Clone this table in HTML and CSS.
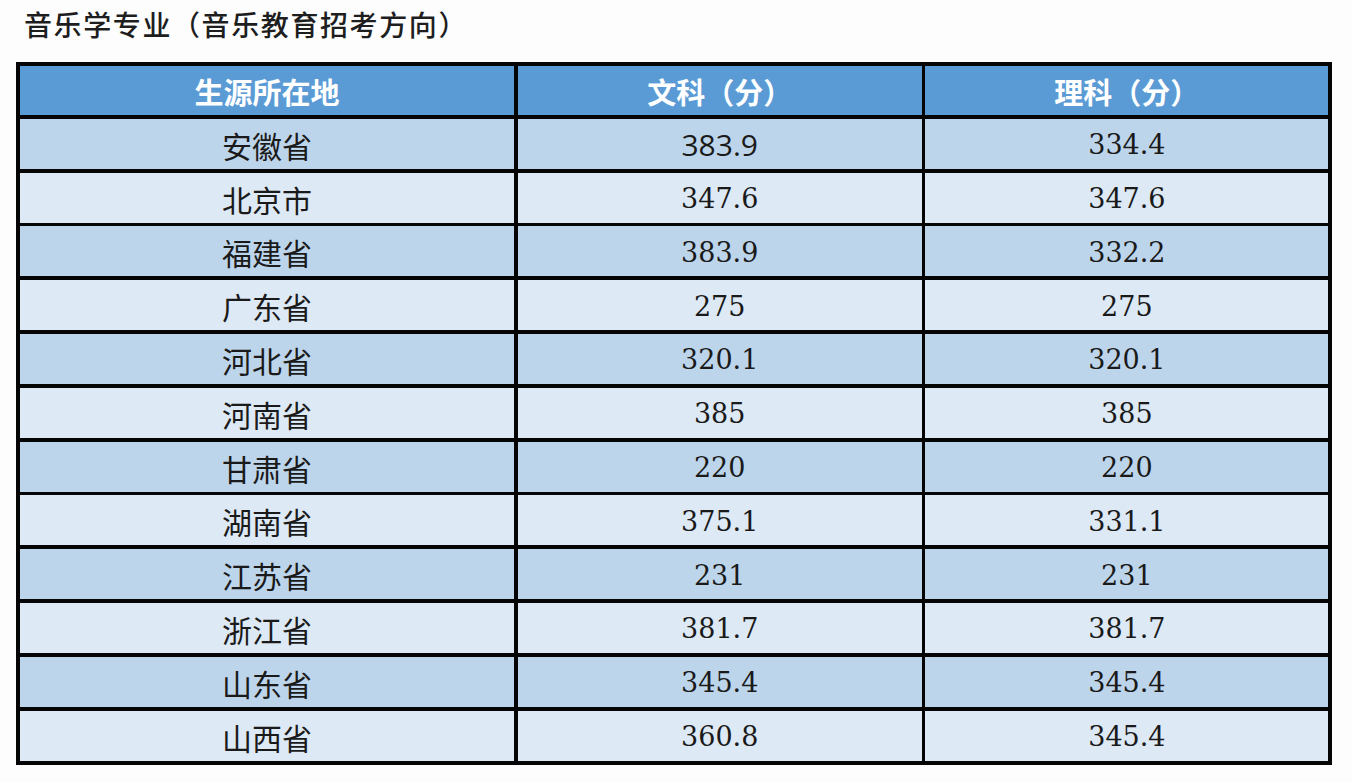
FILE: index.html
```html
<!DOCTYPE html>
<html lang="zh">
<head>
<meta charset="utf-8">
<title>音乐学专业</title>
<link rel="stylesheet" href="styles.css">
</head>
<body>
<h1 class="title">音乐学专业（音乐教育招考方向）</h1>
<div class="table">
  <div class="cell head">生源所在地</div>
  <div class="cell head">文科（分）</div>
  <div class="cell head">理科（分）</div>

  <div class="cell dark name">安徽省</div>
  <div class="cell dark num sans">383.9</div>
  <div class="cell dark num">334.4</div>

  <div class="cell light name">北京市</div>
  <div class="cell light num">347.6</div>
  <div class="cell light num">347.6</div>

  <div class="cell dark name">福建省</div>
  <div class="cell dark num">383.9</div>
  <div class="cell dark num">332.2</div>

  <div class="cell light name">广东省</div>
  <div class="cell light num">275</div>
  <div class="cell light num">275</div>

  <div class="cell dark name">河北省</div>
  <div class="cell dark num">320.1</div>
  <div class="cell dark num">320.1</div>

  <div class="cell light name">河南省</div>
  <div class="cell light num">385</div>
  <div class="cell light num">385</div>

  <div class="cell dark name">甘肃省</div>
  <div class="cell dark num">220</div>
  <div class="cell dark num">220</div>

  <div class="cell light name">湖南省</div>
  <div class="cell light num">375.1</div>
  <div class="cell light num">331.1</div>

  <div class="cell dark name">江苏省</div>
  <div class="cell dark num">231</div>
  <div class="cell dark num">231</div>

  <div class="cell light name">浙江省</div>
  <div class="cell light num">381.7</div>
  <div class="cell light num">381.7</div>

  <div class="cell dark name">山东省</div>
  <div class="cell dark num">345.4</div>
  <div class="cell dark num">345.4</div>

  <div class="cell light name">山西省</div>
  <div class="cell light num">360.8</div>
  <div class="cell light num">345.4</div>
</div>
</body>
</html>
```

FILE: styles.css
```css
html, body {
  margin: 0;
  padding: 0;
  background: #fdfdfd;
}
body {
  font-family: "Noto Sans CJK SC", "Noto Sans", sans-serif;
  color: #1c1c1c;
}
.title {
  margin: 0;
  padding: 6px 0 0 24px;
  height: 62px;
  box-sizing: border-box;
  font-size: 28px;
  font-weight: 500;
  line-height: 36px;
  letter-spacing: 1.6px;
  color: #1e1e1e;
}
.table {
  margin-left: 16px;
  width: 1316px;
  box-sizing: border-box;
  display: grid;
  grid-template-columns: 494px 404px 403px;
  grid-template-rows: 49px repeat(12, 50px);
  column-gap: 3.7px;
  row-gap: 3.8px;
  padding: 4px;
  background: #050505;
}
.cell {
  display: flex;
  align-items: center;
  justify-content: center;
  font-size: 30px;
  line-height: 1;
  padding-top: 2px;
  box-sizing: border-box;
}
.head {
  background: #5b9bd5;
  color: #ffffff;
  font-weight: 700;
  font-size: 29px;
}
.dark {
  background: #bdd5eb;
}
.light {
  background: #dde9f5;
}
.name {
  font-size: 30px;
  color: #1a1a1a;
}
.num {
  font-family: "DejaVu Serif", "Liberation Serif", serif;
  font-size: 27px;
  color: #1a1a1a;
}
.num.sans {
  font-family: "Open Sans", "Liberation Sans", sans-serif;
  font-size: 30px;
}
```
